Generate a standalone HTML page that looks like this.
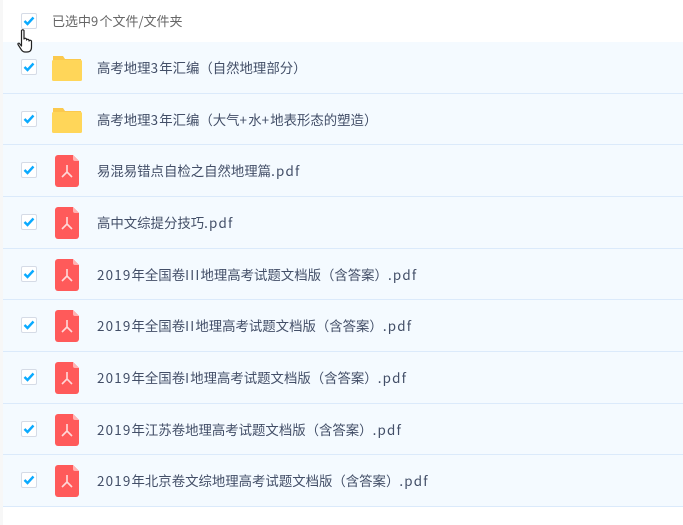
<!DOCTYPE html><html><head><meta charset="utf-8"><style>
body{margin:0;width:683px;height:525px;background:#fff;font-family:"Noto Sans CJK SC",sans-serif;position:relative;overflow:hidden}
.strip{position:absolute;left:0;top:0;width:3px;height:525px;background:#f7f7f7}
.cb{position:absolute;width:14px;height:14px;border:1px solid #d5dbe6;border-radius:2px;background:#fff}
.cb svg{position:absolute;left:1px;top:2px}
.row{position:absolute;left:3px;right:0;height:50.67px;background:#f4faff;border-bottom:1px solid #dbeafb}
.row .cb{left:18px;top:17px}
.row .t{position:absolute;left:94px;top:0;line-height:51px;font-size:13.4px;color:#424e67;white-space:nowrap}
.l{letter-spacing:1.2px}
.ic{position:absolute;left:49px;top:13px}
.pdf{position:absolute;left:52px;top:10px}
</style></head><body>
<div class="strip"></div>
<div class="cb" style="left:21px;top:13px"><svg width="12" height="10" viewBox="0 0 12 10"><path d="M1.5 5l3 3 6-6.5" stroke="#09aaff" stroke-width="2.4" fill="none"/></svg></div>
<div style="position:absolute;left:52px;top:12px;font-size:13px;color:#666;line-height:18px">已选中<span class="l">9</span>个文件/文件夹</div>
<div id="rows"></div>
<svg style="position:absolute;left:16px;top:28px;overflow:visible;z-index:5" width="22" height="26" viewBox="0 0 22 26"><path d="M5.5 2.5Q6.75 1 8 2.5V11Q9.25 9.5 10.5 11V12Q11.75 10.5 13 12V13Q14.25 11.5 15.5 13V19Q15.5 24 11 24H9Q7 24 5.5 22L2 16.5Q1.5 15 3.2 15.2L5.5 18Z" fill="#fff" stroke="#222" stroke-width="1.2" stroke-linejoin="round"/></svg>
<script>
var names=["高考地理3年汇编（自然地理部分）","高考地理3年汇编（大气+水+地表形态的塑造）","易混易错点自检之自然地理篇.pdf","高中文综提分技巧.pdf","2019年全国卷III地理高考试题文档版（含答案）.pdf","2019年全国卷II地理高考试题文档版（含答案）.pdf","2019年全国卷I地理高考试题文档版（含答案）.pdf","2019年江苏卷地理高考试题文档版（含答案）.pdf","2019年北京卷文综地理高考试题文档版（含答案）.pdf"];
var h="";
var chk='<div class="cb"><svg width="12" height="10" viewBox="0 0 12 10"><path d="M1.5 5l3 3 6-6.5" stroke="#09aaff" stroke-width="2.4" fill="none"/></svg></div>';
var fold='<svg class="ic" width="30" height="26" viewBox="0 0 30 26"><path d="M1 1h10l2 3h16v21H1z" fill="#fbc94d"/><rect x="0" y="5" width="30" height="21" rx="1.5" fill="#ffd659"/></svg>';
var pdf='<svg class="pdf" width="24" height="32" viewBox="0 0 24 32"><path d="M3 0h15l6 6v23a3 3 0 0 1-3 3H3a3 3 0 0 1-3-3V3a3 3 0 0 1 3-3z" fill="#ff5a5a"/><path d="M18 0v4a2 2 0 0 0 2 2h4z" fill="#ffb3b3"/><g stroke="#ffd9d9" stroke-width="1.6" fill="none"><path d="M12 10v7M12 17l-5 5M12 17l5 5"/></g></svg>';
for(var i=0;i<9;i++){var n=names[i].replace(/([\x20-\x7e]+)/g,'<span class="l">$1</span>');h+='<div class="row" style="top:'+(42+i*51.67)+'px">'+chk+(i<2?fold:pdf)+'<div class="t">'+n+'</div></div>';}
document.getElementById("rows").innerHTML=h;
</script>
</body></html>
